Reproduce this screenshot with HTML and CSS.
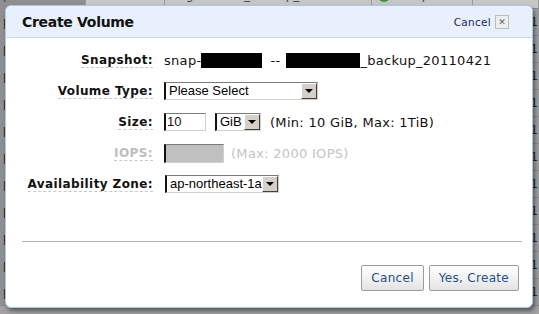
FILE: index.html
```html
<!DOCTYPE html>
<html lang="en">
<head>
  <meta charset="UTF-8" />
  <title>Create Volume</title>
  <link rel="stylesheet" href="styles.css">
</head>
<body>
  <div id="fundo">
    <div class="linha-fundo topo">
      <span class="cel c1">p 31e79859</span>
      <span class="cel c2">18 GiB</span>
      <span class="cel c3">enginechive_backup_20110421</span>
      <span class="cel c4"><i class="bola"></i>completed</span>
      <span class="cel c5">2011-04</span>
    </div>
    <div class="linha-fundo"><span class="cel c1">p</span><span class="cel c5">1</span></div>
    <div class="linha-fundo"><span class="cel c1">p</span><span class="cel c5">1</span></div>
    <div class="linha-fundo"><span class="cel c1">p</span><span class="cel c5">1</span></div>
    <div class="linha-fundo"><span class="cel c1">p</span><span class="cel c5">1</span></div>
    <div class="linha-fundo"><span class="cel c1">p</span><span class="cel c5">1</span></div>
    <div class="linha-fundo"><span class="cel c1">p</span><span class="cel c5">1</span></div>
    <div class="linha-fundo"><span class="cel c1">p</span><span class="cel c5">1</span></div>
    <div class="linha-fundo"><span class="cel c1">p</span><span class="cel c5">1</span></div>
    <div class="linha-fundo"><span class="cel c1">p</span><span class="cel c5">1</span></div>
    <div class="linha-fundo"><span class="cel c1">p</span><span class="cel c5">1</span></div>
    <div class="linha-fundo"><span class="cel c1">p</span><span class="cel c5">1</span></div>
  </div>

  <div id="dialogo">
    <div id="cabecalho">
      <div class="titulo">Create Volume</div>
      <div class="fechar">
        <a href="#" class="link-cancel">Cancel</a>
        <span class="botao-x">&#x2715;</span>
      </div>
    </div>

    <div id="formulario">
      <div class="campo">
        <span class="rotulo">Snapshot:</span>
      </div>
      <div class="valor">snap-<span class="tarja t1"></span><span class="tracos">--</span><span class="tarja t2"></span>_backup_20110421</div>

      <div class="campo">
        <span class="rotulo">Volume Type:</span>
      </div>
      <div class="valor">
        <div class="select largo">
          <span class="select-texto">Please Select</span>
          <span class="seta"></span>
        </div>
      </div>

      <div class="campo">
        <span class="rotulo">Size:</span>
      </div>
      <div class="valor">
        <div class="entrada">10</div>
        <div class="select unidade">
          <span class="select-texto">GiB</span>
          <span class="seta"></span>
        </div>
        <span class="dica">(Min: 10 GiB, Max: 1TiB)</span>
      </div>

      <div class="campo">
        <span class="rotulo desativado">IOPS:</span>
      </div>
      <div class="valor">
        <div class="entrada bloqueada"></div>
        <span class="dica apagada">(Max: 2000 IOPS)</span>
      </div>

      <div class="campo">
        <span class="rotulo">Availability Zone:</span>
      </div>
      <div class="valor">
        <div class="select zona">
          <span class="select-texto">ap-northeast-1a</span>
          <span class="seta"></span>
        </div>
      </div>
    </div>

    <div class="separador"></div>

    <div id="botoes">
      <button class="botao">Cancel</button>
      <button class="botao">Yes, Create</button>
    </div>
  </div>
</body>
</html>
```

FILE: styles.css
```css
body {
  margin: 0;
  width: 539px;
  height: 314px;
  overflow: hidden;
  background-color: #a2a2a2;
  font-family: "DejaVu Sans", Verdana, sans-serif;
  position: relative;
}

/* tabela atrás do modal */
#fundo {
  margin-top: -18px;
}

.linha-fundo {
  display: flex;
  height: 26px;
  border-bottom: 1px solid #8a8a8a;
  font-size: 12px;
  color: #222;
  line-height: 26px;
}

.linha-fundo.topo {
  background-color: #c6c6c6;
  color: #444;
}

.cel {
  padding-left: 3px;
  white-space: nowrap;
  overflow: hidden;
  border-right: 1px solid #9a9a9a;
}

.c1 { width: 82px; background-color: #8f8f8f; }
.c2 { width: 74px; padding-left: 4px; }
.c3 { width: 200px; padding-left: 6px; }
.c4 { width: 94px; padding-left: 6px; }
.c5 { flex: 1; padding-left: 3px; text-align: right; }

.linha-fundo:not(.topo) .c1 { flex: 0 0 82px; }

.bola {
  display: inline-block;
  width: 12px;
  height: 12px;
  border-radius: 50%;
  background-color: #3c9a2c;
  margin-right: 6px;
  vertical-align: middle;
}

/* modal */
#dialogo {
  position: absolute;
  left: 5px;
  top: 5px;
  width: 526px;
  height: 301px;
  background-color: #fff;
  border: 1px solid #a9c9ea;
  border-radius: 6px;
  box-shadow: 2px 3px 4px rgba(0, 0, 0, 0.45);
  display: flex;
  flex-direction: column;
}

#cabecalho {
  height: 31px;
  background-color: #e8f0fb;
  border-bottom: 1px solid #c8daef;
  border-radius: 6px 6px 0 0;
  display: flex;
  align-items: center;
  justify-content: space-between;
  padding: 0 23px 0 16px;
}

.titulo {
  font-size: 14px;
  font-weight: bold;
  letter-spacing: -0.3px;
  color: #111;
  padding-top: 1px;
}

.fechar {
  display: flex;
  align-items: center;
  gap: 4px;
  padding-top: 1px;
}

.link-cancel {
  font-size: 10.5px;
  color: #1c2470;
  text-decoration: none;
  letter-spacing: 0.3px;
}

.botao-x {
  width: 12px;
  height: 12px;
  border: 1px solid #bcbcbc;
  background-color: #eeeeee;
  color: #666;
  font-size: 9px;
  line-height: 12px;
  text-align: center;
  font-weight: bold;
}

#formulario {
  display: grid;
  grid-template-columns: 147px 1fr;
  column-gap: 11px;
  row-gap: 7px;
  grid-auto-rows: 24px;
  padding-top: 10px;
}

.campo {
  display: flex;
  align-items: center;
  justify-content: flex-end;
}

.rotulo {
  font-size: 12px;
  font-weight: bold;
  letter-spacing: 0.4px;
  color: #111;
  line-height: 14px;
  border-bottom: 1px dashed #c8c8c8;
}

.rotulo.desativado {
  color: #bdbdbd;
}

.valor {
  display: flex;
  align-items: center;
  font-size: 13px;
  letter-spacing: 0.3px;
  color: #111;
  white-space: nowrap;
}

.tarja {
  display: inline-block;
  height: 15px;
  background-color: #000;
}

.t1 { width: 61px; }
.t2 { width: 74px; }

.tracos {
  padding: 0 6px 0 8px;
}

.select {
  height: 16px;
  border-top: 1px solid #7a7a7a;
  border-left: 2px solid #111;
  border-bottom: 1px solid #d4d0c8;
  border-right: 1px solid #d4d0c8;
  background-color: #fff;
  display: flex;
  align-items: stretch;
  font-family: "Liberation Sans", Arial, sans-serif;
  font-size: 13px;
  letter-spacing: 0;
}

.select-texto {
  flex: 1;
  padding-left: 3px;
  line-height: 16px;
  color: #000;
}

.seta {
  width: 14px;
  background-color: #d4d0c8;
  border: 1px solid;
  border-color: #fff #404040 #404040 #fff;
  position: relative;
}

.seta::after {
  content: "";
  position: absolute;
  left: 3px;
  top: 5px;
  border-left: 4px solid transparent;
  border-right: 4px solid transparent;
  border-top: 4px solid #000;
}

.largo { width: 151px; }
.unidade { width: 43px; margin-left: 9px; }
.zona { width: 111px; margin-left: 1px; }

.entrada {
  width: 38px;
  height: 16px;
  border-top: 1px solid #7a7a7a;
  border-left: 2px solid #111;
  border-bottom: 1px solid #d4d0c8;
  border-right: 1px solid #d4d0c8;
  font-family: "Liberation Sans", Arial, sans-serif;
  font-size: 13px;
  letter-spacing: 0;
  line-height: 16px;
  padding-left: 1px;
}

.entrada.bloqueada {
  width: 56px;
  height: 17px;
  background-color: #c0c0c0;
}

.dica {
  margin-left: 9px;
}

.dica.apagada {
  margin-left: 7px;
  color: #c4c4c4;
}

.separador {
  margin: 45px 10px 0 16px;
  border-top: 1px solid #b4b4b4;
}

#botoes {
  display: flex;
  justify-content: flex-end;
  gap: 5px;
  padding: 23px 13px 0 0;
}

.botao {
  height: 26px;
  padding: 0 9px;
  font-family: "DejaVu Sans", Verdana, sans-serif;
  font-size: 12px;
  letter-spacing: 0.3px;
  color: #1f4f8f;
  background: linear-gradient(#ffffff, #e4e4e4);
  border: 1px solid #9c9c9c;
  border-radius: 2px;
  cursor: pointer;
}
```
